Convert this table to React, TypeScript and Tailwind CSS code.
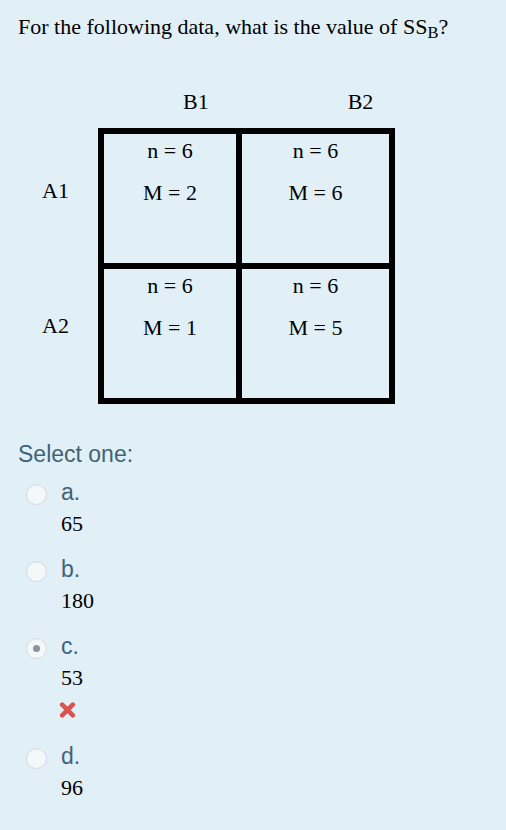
const serif = "font-['Liberation_Serif','Times_New_Roman',serif]";
const sans = "font-['Liberation_Sans',Arial,sans-serif]";

type Option = {
  letter: string;
  answer: string;
  checked?: boolean;
  wrong?: boolean;
};

const options: Option[] = [
  { letter: 'a.', answer: '65' },
  { letter: 'b.', answer: '180' },
  { letter: 'c.', answer: '53', checked: true, wrong: true },
  { letter: 'd.', answer: '96' },
];

function Cell({ n, m }: { n: string; m: string }) {
  return (
    <div className="h-[129px] bg-[#e1eff7] pt-[4px] text-center">
      <p className="leading-[26px]">n = {n}</p>
      <p className="mt-[16px] leading-[26px]">M = {m}</p>
    </div>
  );
}

function Radio({ checked }: { checked?: boolean }) {
  return (
    <span className="mt-[6px] flex h-[21px] w-[21px] shrink-0 items-center justify-center rounded-full border border-[#d4dadd] bg-[#f4f8fa] shadow-[inset_0_1px_1px_rgba(0,0,0,0.04)]">
      {checked && <span className="h-[7px] w-[7px] rounded-full bg-[#8c9499]" />}
    </span>
  );
}

function WrongMark() {
  return (
    <svg width="17" height="16" viewBox="0 0 17 16" className="block">
      <path
        d="M3.2 2.7 L13.8 13.3 M13.8 2.7 L3.2 13.3"
        stroke="#d9534f"
        strokeWidth="4.6"
        strokeLinecap="round"
      />
    </svg>
  );
}

export default function App() {
  return (
    <div className={`min-h-[830px] w-full bg-[#e1eff7] text-[22px] text-black ${serif}`}>
      {/* Question text */}
      <div className="px-[18px] pt-[14px]">
        <p className="leading-[26px]">
          For the following data, what is the value of SS<sub>B</sub>?
        </p>
      </div>

      {/* Column headers */}
      <div className="mt-[49px] flex leading-[26px]">
        <span className="pl-[183px]">B1</span>
        <span className="ml-[139px]">B2</span>
      </div>

      {/* Data table */}
      <div className="mt-[13px] flex">
        <div className="w-[98px] shrink-0">
          <div className="h-[135px] pl-[42px] pt-[50px] leading-[26px]">A1</div>
          <div className="h-[135px] pl-[42px] pt-[50px] leading-[26px]">A2</div>
        </div>
        <div className="grid grid-cols-[132px_147px] gap-[6px] bg-black p-[6px]">
          <Cell n="6" m="2" />
          <Cell n="6" m="6" />
          <Cell n="6" m="1" />
          <Cell n="6" m="5" />
        </div>
      </div>

      {/* Answers */}
      <div className={`mt-[36px] px-[18px] text-[23px] leading-[28px] text-[#3f6377] ${sans}`}>
        Select one:
      </div>
      <div className="mt-[10px] flex flex-col gap-[18px] pl-[26px]">
        {options.map((opt) => (
          <div key={opt.letter} className="flex gap-[14px]">
            <Radio checked={opt.checked} />
            <div>
              <div className={`text-[23px] leading-[28px] text-[#3f6377] ${sans}`}>{opt.letter}</div>
              <div className={`mt-[5px] text-[22px] leading-[26px] text-black ${serif}`}>{opt.answer}</div>
              {opt.wrong && (
                <div className="mb-[6px] mt-[11px] -ml-[2px]">
                  <WrongMark />
                </div>
              )}
            </div>
          </div>
        ))}
      </div>
    </div>
  );
}
